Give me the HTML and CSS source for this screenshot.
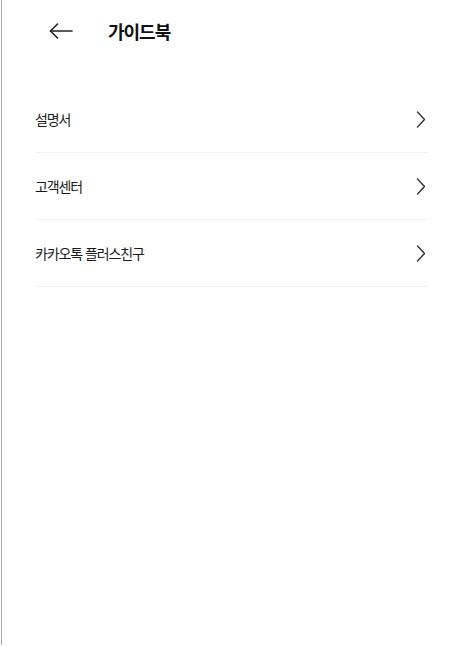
FILE: index.html
```html
<!DOCTYPE html>
<html lang="ko">
<head>
    <meta charset="UTF-8">
    <meta name="viewport" content="width=device-width, initial-scale=1.0">
    <title>가이드북</title>
    <link rel="stylesheet" href="styles.css">
</head>
<body>

    <div class="screen">
        <!-- Header -->
        <div class="header">
            <a href="#" class="back-btn" aria-label="뒤로">
                <svg width="24" height="16" viewBox="0 0 24 16" fill="none" stroke="#222" stroke-width="1.6" stroke-linecap="round" stroke-linejoin="round">
                    <path d="M23 8H1.5"/>
                    <path d="M8.5 1L1.5 8l7 7"/>
                </svg>
            </a>
            <h1 class="title">가이드북</h1>
        </div>

        <!-- Menu list -->
        <ul class="menu">
            <li class="menu-item">
                <span>설명서</span>
                <svg class="chevron" width="10" height="17" viewBox="0 0 10 17" fill="none" stroke="#333" stroke-width="1.4" stroke-linecap="round" stroke-linejoin="round"><path d="M1.5 1l7 7.5-7 7.5"/></svg>
            </li>
            <li class="menu-item">
                <span>고객센터</span>
                <svg class="chevron" width="10" height="17" viewBox="0 0 10 17" fill="none" stroke="#333" stroke-width="1.4" stroke-linecap="round" stroke-linejoin="round"><path d="M1.5 1l7 7.5-7 7.5"/></svg>
            </li>
            <li class="menu-item">
                <span>카카오톡 플러스친구</span>
                <svg class="chevron" width="10" height="17" viewBox="0 0 10 17" fill="none" stroke="#333" stroke-width="1.4" stroke-linecap="round" stroke-linejoin="round"><path d="M1.5 1l7 7.5-7 7.5"/></svg>
            </li>
        </ul>
    </div>

</body>
</html>
```

FILE: styles.css
```css
body {
    margin: 0;
    padding: 0;
    background: #fff;
    font-family: "Noto Sans CJK KR", "Noto Sans", sans-serif;
    color: #222;
}

.screen {
    height: 645px;
    margin-left: 1px;
    border-left: 1px solid #a8a8a8;
}

.header {
    height: 62px;
    display: flex;
    align-items: center;
    padding-left: 47px;
}

.back-btn {
    display: flex;
    width: 24px;
}

.title {
    margin: 0 0 0 35px;
    font-size: 18px;
    font-weight: 700;
    letter-spacing: -1px;
    color: #111;
}

.menu {
    list-style: none;
    margin: 0;
    padding: 24px 28px 0 33px;
}

.menu-item {
    height: 66px;
    display: flex;
    align-items: center;
    justify-content: space-between;
    border-bottom: 1px solid #f2f2f2;
    font-size: 14px;
    letter-spacing: -1.1px;
    color: #1a1a1a;
}

.chevron {
    margin-right: 1px;
}
```
